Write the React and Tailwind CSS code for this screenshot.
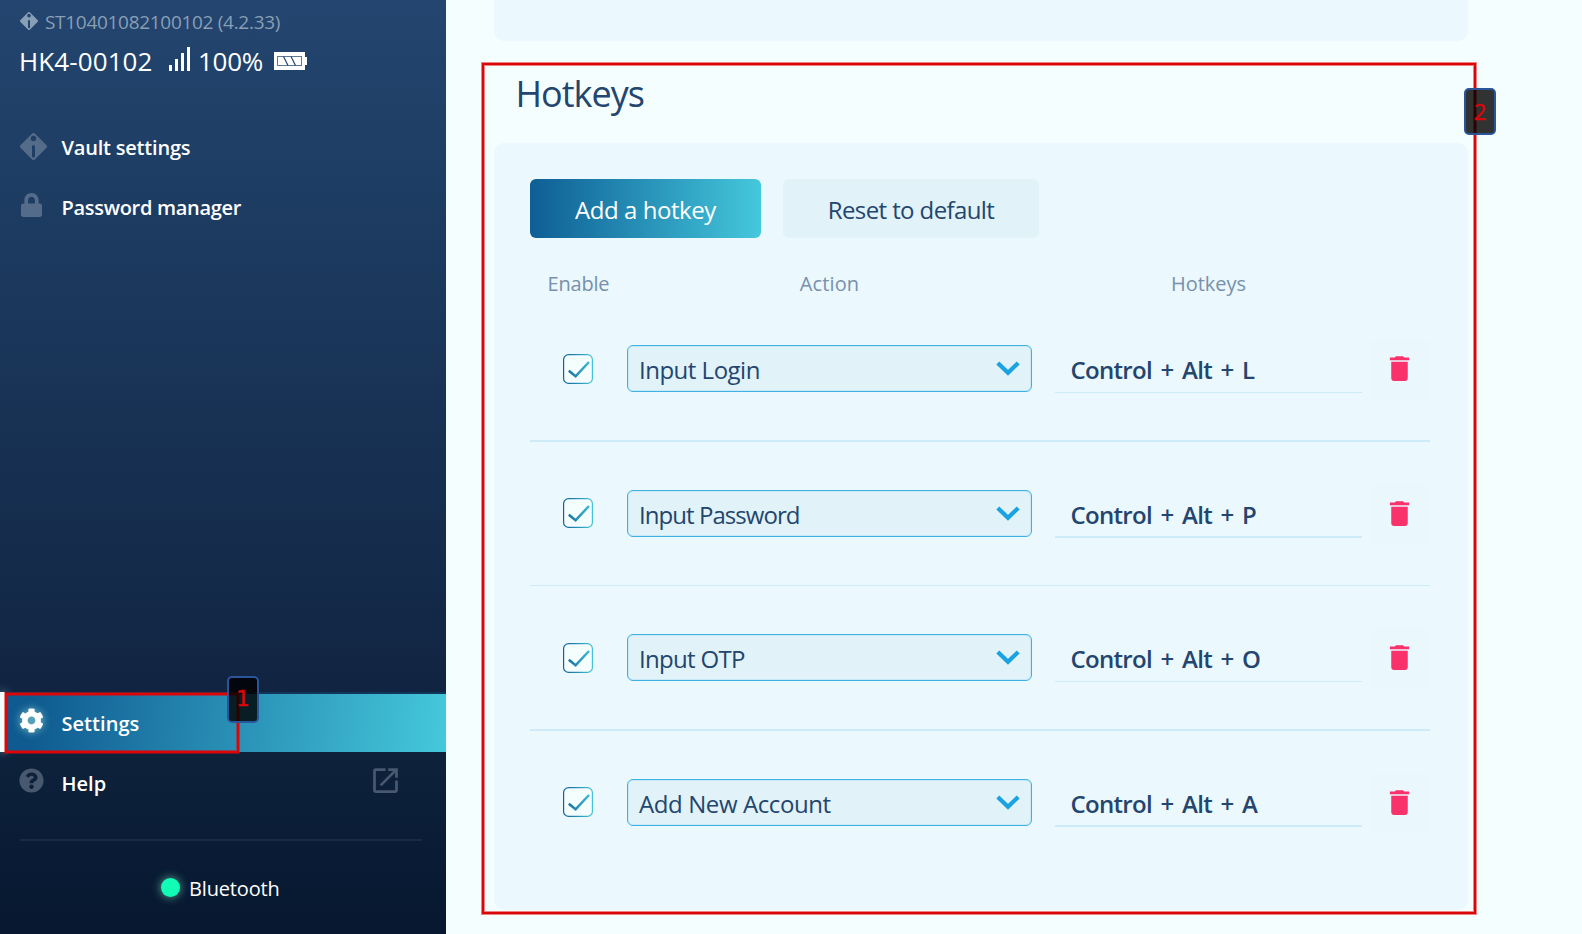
import { FaCog, FaLock, FaQuestionCircle } from "react-icons/fa";
import { MdDelete, MdOpenInNew } from "react-icons/md";

const hotkeys = [
  {
    action: "Input Login",
    keys: "Control + Alt + L",
    track: "tracking-[-0.5px] pt-[2px]",
    check: "mt-[9px]",
    line: "h-[48px] border-b",
    divider: "h-[2px]",
  },
  {
    action: "Input Password",
    keys: "Control + Alt + P",
    track: "tracking-[-0.95px] pt-px",
    check: "mt-[8px]",
    line: "h-[48px] border-b-2",
    divider: "h-px",
  },
  {
    action: "Input OTP",
    keys: "Control + Alt + O",
    track: "tracking-[-0.7px] pt-[2px]",
    check: "mt-[9px]",
    line: "h-[48px] border-b",
    divider: "h-[2px]",
  },
  {
    action: "Add New Account",
    keys: "Control + Alt + A",
    track: "tracking-[-0.4px] pt-px",
    check: "mt-[8px]",
    line: "h-[48px] border-b-2",
    divider: "",
  },
];

function VaultIcon({ size, className }) {
  return (
    <svg width={size} height={size} viewBox="0 0 27 27" className={className} fill="currentColor">
      <path
        fillRule="evenodd"
        d="M11.9 0.7 a2.3 2.3 0 0 1 3.2 0 L26.3 11.9 a2.3 2.3 0 0 1 0 3.2 L15.1 26.3 a2.3 2.3 0 0 1 -3.2 0 L0.7 15.1 a2.3 2.3 0 0 1 0 -3.2 Z M13.5 2.8 a2.7 2.7 0 1 0 0 5.4 a2.7 2.7 0 1 0 0 -5.4 Z M12 13.4 V23 a1.5 1.5 0 0 0 3 0 V13.4 a1.5 1.5 0 0 0 -3 0 Z"
      />
    </svg>
  );
}

function Signal() {
  return (
    <svg width="21" height="24" viewBox="0 0 21 24" fill="#fff">
      <rect x="0" y="18" width="3" height="6" />
      <rect x="6" y="12" width="3" height="12" />
      <rect x="12" y="6" width="3" height="18" />
      <rect x="18" y="0" width="3" height="24" />
    </svg>
  );
}

function Battery() {
  return (
    <svg width="33" height="18" viewBox="0 0 33 18">
      <path d="M0 0 H31 V5 H33 V13 H31 V18 H0 Z" fill="#fff" />
      <rect x="3.5" y="4.5" width="24" height="9" fill="none" stroke="#5d7796" strokeWidth="1" />
      <path d="M9.5 4.5 L14 13.5 M17 4.5 L21.5 13.5" stroke="#23456e" strokeWidth="1.2" fill="none" />
    </svg>
  );
}

function Checkbox({ className }) {
  return (
    <svg width="30" height="30" viewBox="0 0 30 30" fill="none" className={className}>
      <defs>
        <linearGradient id="tick" gradientUnits="userSpaceOnUse" x1="0" y1="0" x2="30" y2="0">
          <stop offset="0" stopColor="#0f6095" />
          <stop offset="1" stopColor="#45c5d9" />
        </linearGradient>
      </defs>
      <rect x="0.6" y="0.6" width="28.8" height="28.8" rx="5" fill="#f5feff" stroke="url(#tick)" strokeWidth="1.2" />
      <path d="M5.8 16.8 L12.6 22.3 L26 8" stroke="url(#tick)" strokeWidth="2.5" />
    </svg>
  );
}

function Chevron() {
  return (
    <svg width="24" height="15" viewBox="0 0 24 15" fill="none">
      <path d="M1.8 2 L12 11.8 L22.2 2" stroke="#1aa3e0" strokeWidth="4.2" />
    </svg>
  );
}

function NavItem({ icon, children, size = "h-[60px] pl-5", textClass = "" }) {
  return (
    <div className={`flex items-center text-[20px] font-semibold text-white ${size}`}>
      <div className="flex w-[41.5px] shrink-0 items-center">{icon}</div>
      <span className={textClass}>{children}</span>
    </div>
  );
}

function Sidebar() {
  return (
    <aside className="flex h-full w-[446px] shrink-0 flex-col bg-[linear-gradient(180deg,#23456f_0%,#1c3a5f_27%,#122644_71%,#0c2039_84%,#071830_100%)] text-white">
      <div className="flex items-center pt-3 pl-5 text-[19px] leading-[20px] tracking-[-0.3px] text-[#899fb5]">
        <VaultIcon size={18} className="mr-[7px] -mt-[2px]" />
        ST10401082100102 (4.2.33)
      </div>
      <div className="mt-[15px] flex h-[28px] items-start pl-[19px] text-[26px] leading-[28px]">
        <span className="w-[150px] tracking-[0.1px]">HK4-00102</span>
        <Signal />
        <span className="ml-[8px] w-[76px] tracking-[-0.3px]">100%</span>
        <div className="mt-[5px]">
          <Battery />
        </div>
      </div>

      <nav className="mt-[42px]">
        <NavItem
          icon={<VaultIcon size={27} className="-mt-px text-[#546b89]" />}
          textClass="pt-[2px] tracking-[-0.2px]"
        >
          Vault settings
        </NavItem>
        <NavItem
          icon={<FaLock className="-mt-[4px] ml-px h-[24px] w-[21px] text-[#546b89]" />}
          textClass="pt-[2px] tracking-[-0.3px]"
        >
          Password manager
        </NavItem>
      </nav>

      <div className="mt-auto">
        <div className="flex h-[60px]">
          <div className="w-[5px] shrink-0 bg-[#f5feff] shadow-[0_0_10px_rgba(170,235,235,0.75)]" />
          <div className="flex-1 border-t-2 border-[#12355a] bg-linear-[96deg] from-[#0f5a90] from-6% to-[#45c8dc]">
            <NavItem
              size="h-[58px] pl-[15px]"
              icon={
                <FaCog className="-mt-[6px] ml-[-1px] size-[25px] drop-shadow-[0_0_4px_rgba(150,225,220,0.8)]" />
              }
              textClass="pt-[2px] tracking-[0.05px]"
            >
              Settings
            </NavItem>
          </div>
        </div>
        <div className="flex h-[60px] items-center justify-between pr-[44px]">
          <NavItem
            icon={<FaQuestionCircle className="-mt-[3px] ml-[-1px] size-[25px] text-[#48586e]" />}
            textClass="pt-[3px]"
          >
            Help
          </NavItem>
          <MdOpenInNew className="-mt-[3px] size-[33px] text-[#48586e]" />
        </div>
        <div className="mt-[27px] mr-6 ml-5 h-[2px] bg-[#172a46]" />
        <div className="flex h-[93px] items-center pl-[161px] text-[20px]">
          <div className="mr-[9px] size-[19px] rounded-full bg-[#11fdb5] shadow-[0_0_10px_rgba(130,240,200,0.7)]" />
          <span className="pt-[3px] tracking-[-0.15px]">Bluetooth</span>
        </div>
      </div>
    </aside>
  );
}

function HotkeyRow({ item }) {
  return (
    <>
      <div className="my-12 flex h-[47px] items-start">
        <div className="w-[97px] pl-[33px]">
          <Checkbox className={item.check} />
        </div>
        <div className="flex h-[47px] w-[405px] items-center justify-between rounded-[6px] border border-[#3fb2e5] bg-[#e1f2f8] pr-[11px] pl-[11px] text-[24px] leading-[45px] shadow-[inset_0_0_0_1px_#c9e9f7]">
          <span className={item.track}>{item.action}</span>
          <Chevron />
        </div>
        <div
          className={`ml-[23px] w-[307px] border-[#cdebf8] pt-px pl-[15.5px] text-[24px] leading-[47px] font-semibold tracking-[-0.7px] [word-spacing:3px] ${item.line}`}
        >
          {item.keys}
        </div>
        <button className="-mt-[6px] ml-2 flex size-[60px] items-start rounded-[6px] bg-[#eaf7fc] pt-[13px] pl-[13px]">
          <MdDelete className="size-[33px] text-[#fa326c]" />
        </button>
      </div>
      {item.divider && <div className={`bg-[#cdebf8] ${item.divider}`} />}
    </>
  );
}

export default function App() {
  return (
    <div className="relative flex h-[934px] w-[1582px] overflow-hidden bg-[#f5feff] font-['Open_Sans','Noto_Sans',sans-serif] text-[#23456e]">
      <Sidebar />
      <main className="w-[1022px] pl-[48px]">
        <div className="h-[41px] rounded-b-[10px] bg-[#ebf8fd]" />
        <h1 className="mt-[29px] pl-[21.5px] text-[36px] leading-[48px] tracking-[-1px]">Hotkeys</h1>
        <section className="mt-[25px] h-[767px] rounded-[10px] bg-[#ebf8fd] pt-9 pr-[38px] pl-9">
          <div className="flex gap-[22px] text-[24px]">
            <button className="h-[59px] w-[231px] rounded-[6px] bg-linear-to-r from-[#0f5e94] to-[#45c8dc] pt-[2px] tracking-[-0.45px] text-white">
              Add a hotkey
            </button>
            <button className="h-[59px] w-[256px] rounded-[6px] bg-[#e1f2f8] pt-[2px] tracking-[-0.6px]">
              Reset to default
            </button>
          </div>
          <div className="mt-[32px] flex h-[27px] text-center text-[20px] leading-[28px] text-[#7890ac]">
            <div className="w-[97px] tracking-[-0.2px]">Enable</div>
            <div className="w-[405px] tracking-[0.1px]">Action</div>
            <div className="ml-[23px] w-[307px]">Hotkeys</div>
          </div>
          {hotkeys.map((item) => (
            <HotkeyRow key={item.action} item={item} />
          ))}
        </section>
      </main>

      <div className="absolute top-[693px] left-[5px] h-[60px] w-[234px] border-2 border-[#dc0508] shadow-[0_0_0_1px_rgba(220,5,8,0.5),inset_0_0_0_1px_rgba(220,5,8,0.5)]" />
      <div className="absolute top-[676px] left-[227px] flex h-[47px] w-[32px] items-center justify-center rounded-[5px] border-2 border-[#2a559b] bg-black/80 font-['DejaVu_Sans',sans-serif] text-[21px] text-[#dc0508] [-webkit-text-stroke:0.5px_#dc0508]">
        1
      </div>
      <div className="absolute top-[63px] left-[482px] h-[851px] w-[994px] border-2 border-[#dc0508] shadow-[0_0_0_1px_rgba(220,5,8,0.5),inset_0_0_0_1px_rgba(220,5,8,0.5)]" />
      <div className="absolute top-[88px] left-[1464px] flex h-[47px] w-[32px] items-center justify-center rounded-[5px] border-2 border-[#2a559b] bg-black/80 text-[22px] text-[#dc0508] [-webkit-text-stroke:0.4px_#dc0508]">
        2
      </div>
    </div>
  );
}
